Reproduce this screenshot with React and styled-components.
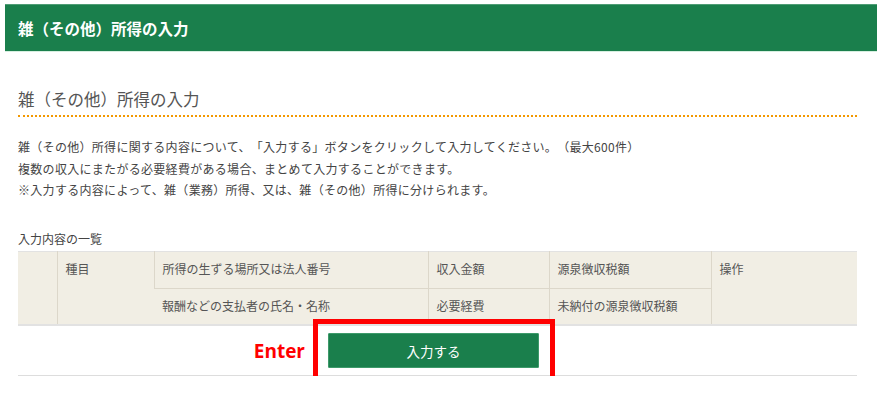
import React from 'react';
import styled, { createGlobalStyle } from 'styled-components';

const GlobalStyle = createGlobalStyle`
  html, body {
    margin: 0;
    padding: 0;
    background: #fff;
  }
  body {
    font-family: "Noto Sans CJK JP", "Noto Sans", sans-serif;
    color: #444;
    text-spacing-trim: space-all;
  }
`;

const $green = '#1a7f4c';

const Page = styled.div`
  padding: 4px 0 0 5px;
`;

const TitleBar = styled.header`
  height: 46px;
  display: flex;
  align-items: center;
  padding-left: 13px;
  background: ${$green};
  border-top: 1px solid #4f9d75;
  box-shadow: 0 1px 0 #d6efe0;
  color: #fff;
  font-size: 15.5px;
  font-weight: bold;
`;

const Content = styled.div`
  margin-left: 13px;
  width: 839px;
`;

const SectionTitle = styled.h2`
  margin: 36px 0 0;
  padding-bottom: 4px;
  font-size: 16.5px;
  line-height: 24px;
  font-weight: normal;
  color: #555;
  border-bottom: 2px dotted #f39800;
`;

const Lead = styled.p`
  margin: 19px 0 0;
  font-size: 12px;
  line-height: 21.5px;
  letter-spacing: 0.3px;
  color: #444;
`;

const ListLabel = styled.div`
  margin-top: 29px;
  font-size: 12px;
  line-height: 18px;
  color: #444;
`;

const Table = styled.table`
  margin-top: 3px;
  width: 100%;
  border-collapse: collapse;
  table-layout: fixed;
  background: #f1eee4;
  border-top: 1px solid #e2e2e2;
  border-bottom: 2px solid #e2e2e2;
`;

const Cell = styled.th`
  height: 37px;
  box-sizing: border-box;
  padding: 8px 8px 0;
  vertical-align: top;
  text-align: left;
  font-size: 12px;
  line-height: 18px;
  font-weight: normal;
  color: #555;
  border-left: 1px solid #dcd7ca;
  border-top: ${p => (p.$second ? '1px solid #dcd7ca' : 'none')};
  &:first-child {
    border-left: none;
  }
`;

const ActionRow = styled.div`
  display: flex;
  justify-content: center;
  padding: 7px 8px 7px 0;
  border-bottom: 1px solid #dddddd;
`;

const ButtonWrap = styled.div`
  position: relative;
`;

const EnterNote = styled.span`
  position: absolute;
  right: calc(100% + 23px);
  top: 50%;
  transform: translateY(-50%);
  font-family: "Open Sans", "Liberation Sans", sans-serif;
  font-size: 19px;
  font-weight: bold;
  color: #ff0000;
  white-space: nowrap;
`;

const Highlight = styled.div`
  position: absolute;
  left: -15px;
  right: -16px;
  top: -14px;
  bottom: -15px;
  border: 5px solid #ff0000;
  pointer-events: none;
`;

const PrimaryButton = styled.button`
  display: block;
  width: 211px;
  height: 35px;
  margin: 0;
  background: ${$green};
  border: 1px solid #3d9a6a;
  border-radius: 1px;
  color: #fff;
  font-family: "Noto Sans CJK JP", sans-serif;
  font-size: 13.5px;
  cursor: pointer;
`;

const cols = [39, 97, 274, 121, 162, 146];

export default function App() {
  return (
    <Page>
      <GlobalStyle />
      <TitleBar>雑（その他）所得の入力</TitleBar>
      <Content>
        <SectionTitle>雑（その他）所得の入力</SectionTitle>
        <Lead>
          雑（その他）所得に関する内容について、「入力する」ボタンをクリックして入力してください。（最大600件）
          <br />
          複数の収入にまたがる必要経費がある場合、まとめて入力することができます。
          <br />
          ※入力する内容によって、雑（業務）所得、又は、雑（その他）所得に分けられます。
        </Lead>
        <ListLabel>入力内容の一覧</ListLabel>
        <Table>
          <colgroup>
            {cols.map((w, i) => (
              <col key={i} style={{ width: w }} />
            ))}
          </colgroup>
          <thead>
            <tr>
              <Cell rowSpan={2} />
              <Cell rowSpan={2}>種目</Cell>
              <Cell>所得の生ずる場所又は法人番号</Cell>
              <Cell>収入金額</Cell>
              <Cell>源泉徴収税額</Cell>
              <Cell rowSpan={2}>操作</Cell>
            </tr>
            <tr>
              <Cell $second>報酬などの支払者の氏名・名称</Cell>
              <Cell $second>必要経費</Cell>
              <Cell $second>未納付の源泉徴収税額</Cell>
            </tr>
          </thead>
        </Table>
        <ActionRow>
          <ButtonWrap>
            <EnterNote>Enter</EnterNote>
            <PrimaryButton type="button">入力する</PrimaryButton>
            <Highlight />
          </ButtonWrap>
        </ActionRow>
      </Content>
    </Page>
  );
}
